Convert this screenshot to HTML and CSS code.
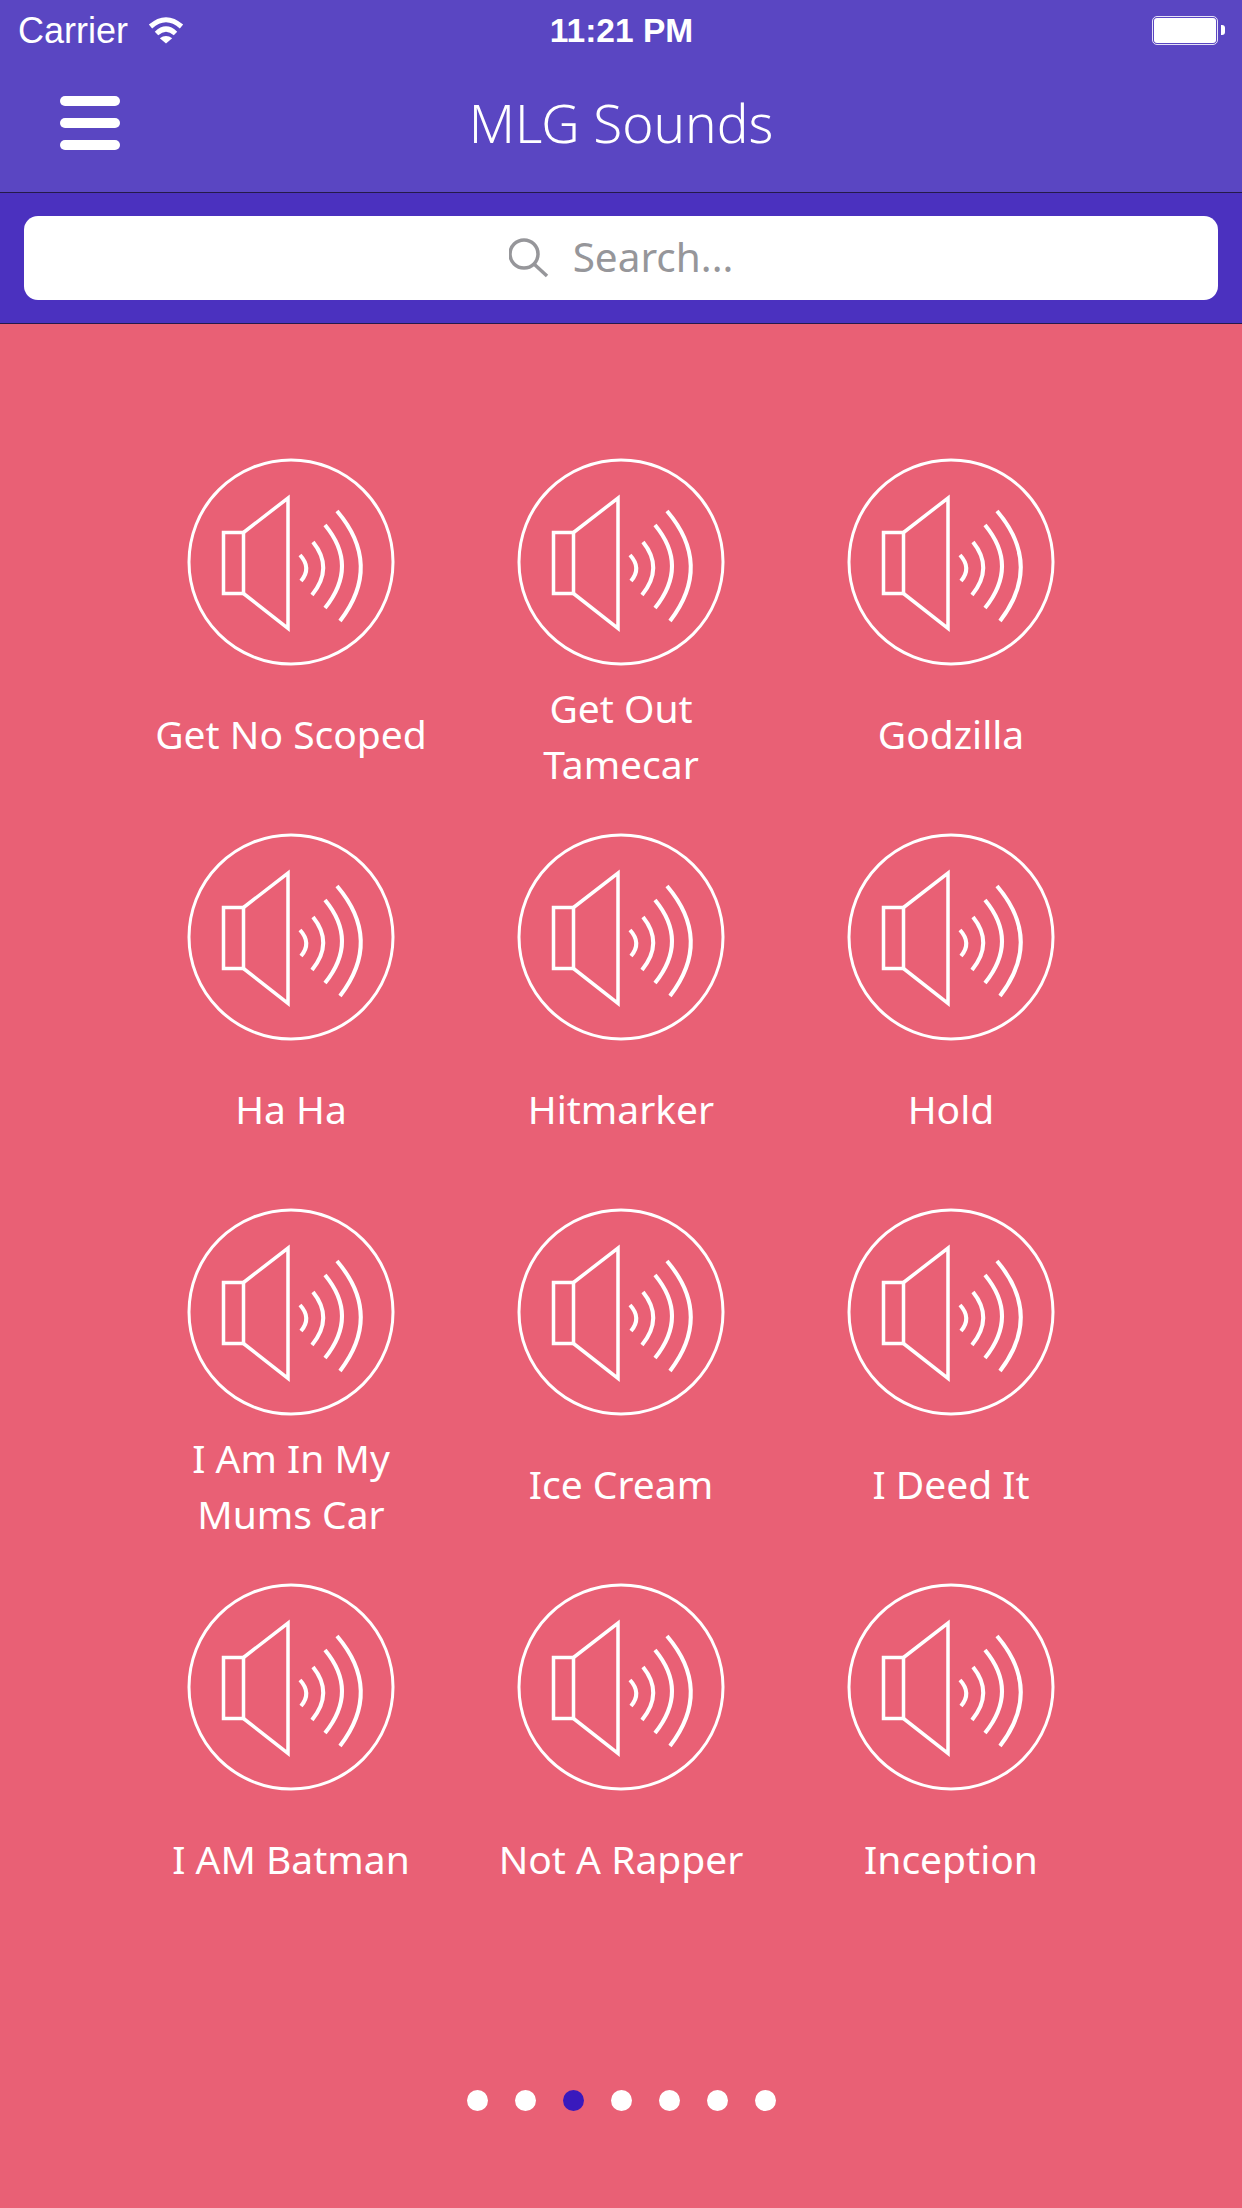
FILE: index.html
```html
<!DOCTYPE html>
<html lang="en">
<head>
  <meta charset="UTF-8">
  <meta name="viewport" content="width=device-width, initial-scale=1.0">
  <title>MLG Sounds</title>
  <link rel="stylesheet" href="styles.css">
</head>
<body>
  <svg class="sprite" width="0" height="0">
    <symbol id="speaker" viewBox="0 0 240 240">
      <circle class="ring" cx="120" cy="122" r="102" />
      <rect class="cone" x="52.5" y="92.5" width="20" height="61" />
      <path class="cone" d="M72.5 92.5 L117 58 V188.5 L72.5 153.5" />
      <path d="M129 115 Q141 128 130 141" />
      <path d="M142 102 Q163 128 141 155" />
      <path d="M154 85 Q188 126 154 168" />
      <path d="M166 71 Q212 125 169 181" />
    </symbol>
  </svg>

  <!-- Header -->
  <header class="top">
    <div class="status-bar">
      <div class="status-left">
        <span>Carrier</span>
        <svg class="wifi" width="38" height="28" viewBox="0 0 38 28">
          <path class="wifi-arc" d="M3.5 10.5 Q19 -3 34.5 10.5" />
          <path class="wifi-arc" d="M9.5 17.5 Q19 8.5 28.5 17.5" />
          <path d="M12.8 22.2 Q19 17.8 25.2 22.2 L19 27.5 Z" />
        </svg>
      </div>
      <div class="status-time">11:21 PM</div>
      <div class="status-right">
        <div class="battery"><div class="battery-fill"></div></div>
        <div class="battery-nub"></div>
      </div>
    </div>
    <nav class="nav">
      <div class="menu">
        <span></span>
        <span></span>
        <span></span>
      </div>
      <div class="title">MLG Sounds</div>
      <div></div>
    </nav>
  </header>

  <!-- Search -->
  <div class="search-band">
    <div class="search-box">
      <svg class="search-icon" width="40" height="40" viewBox="0 0 40 40">
        <circle cx="15" cy="16" r="14" />
        <path d="M25 26 L38 38" />
      </svg>
      <span>Search...</span>
    </div>
  </div>

  <!-- Sounds -->
  <main class="sounds">
    <div class="sound-grid">
      <div class="sound"><svg class="sound-icon"><use href="#speaker" /></svg><p class="sound-label">Get No Scoped</p></div>
      <div class="sound"><svg class="sound-icon"><use href="#speaker" /></svg><p class="sound-label">Get Out<br>Tamecar</p></div>
      <div class="sound"><svg class="sound-icon"><use href="#speaker" /></svg><p class="sound-label">Godzilla</p></div>
      <div class="sound"><svg class="sound-icon"><use href="#speaker" /></svg><p class="sound-label">Ha Ha</p></div>
      <div class="sound"><svg class="sound-icon"><use href="#speaker" /></svg><p class="sound-label">Hitmarker</p></div>
      <div class="sound"><svg class="sound-icon"><use href="#speaker" /></svg><p class="sound-label">Hold</p></div>
      <div class="sound"><svg class="sound-icon"><use href="#speaker" /></svg><p class="sound-label">I Am In My<br>Mums Car</p></div>
      <div class="sound"><svg class="sound-icon"><use href="#speaker" /></svg><p class="sound-label">Ice Cream</p></div>
      <div class="sound"><svg class="sound-icon"><use href="#speaker" /></svg><p class="sound-label">I Deed It</p></div>
      <div class="sound"><svg class="sound-icon"><use href="#speaker" /></svg><p class="sound-label">I AM Batman</p></div>
      <div class="sound"><svg class="sound-icon"><use href="#speaker" /></svg><p class="sound-label">Not A Rapper</p></div>
      <div class="sound"><svg class="sound-icon"><use href="#speaker" /></svg><p class="sound-label">Inception</p></div>
    </div>
    <div class="dots">
      <span class="dot"></span>
      <span class="dot"></span>
      <span class="dot active"></span>
      <span class="dot"></span>
      <span class="dot"></span>
      <span class="dot"></span>
      <span class="dot"></span>
    </div>
  </main>
</body>
</html>
```

FILE: styles.css
```css
:root {
  --header: #5a46c2;
  --band: #4b31bf;
  --pink: #e96075;
  --active: #3919bd;
  --line: #241a4a;
}

* {
  margin: 0;
  padding: 0;
  box-sizing: border-box;
}

body {
  width: 1242px;
  height: 2208px;
  font-family: 'Noto Sans', sans-serif;
  background: var(--pink);
  color: white;
  display: flex;
  flex-direction: column;
  overflow: hidden;
}

.sprite {
  display: block;
  height: 0;
}

/* Header */
.top {
  background: var(--header);
  height: 193px;
  border-bottom: 1px solid var(--line);
  display: flex;
  flex-direction: column;
}

.status-bar {
  height: 60px;
  padding: 2px 17px 0 18px;
  display: grid;
  grid-template-columns: 1fr auto 1fr;
  align-items: center;
  font-family: 'Liberation Sans', sans-serif;
  font-size: 36px;
}

.status-left {
  display: flex;
  align-items: center;
  gap: 19px;
}

.wifi {
  fill: white;
  margin-bottom: 3px;
}

.wifi-arc {
  fill: none;
  stroke: white;
  stroke-width: 5;
}

.status-time {
  font-weight: 700;
  font-size: 33.5px;
}

.status-right {
  display: flex;
  justify-content: flex-end;
  align-items: center;
  gap: 3px;
  margin-bottom: 2px;
}

.battery {
  width: 66px;
  height: 29px;
  border: 1px solid #e6e2f7;
  border-radius: 5px;
  padding: 1px;
}

.battery-fill {
  height: 100%;
  background: white;
  border-radius: 3px;
}

.battery-nub {
  width: 4px;
  height: 10px;
  background: white;
  border-radius: 0 3px 3px 0;
}

.nav {
  flex: 1;
  display: grid;
  grid-template-columns: 1fr auto 1fr;
  align-items: center;
  padding: 0 60px 8px;
}

.menu {
  width: 60px;
  margin-top: 2px;
  display: flex;
  flex-direction: column;
  gap: 12px;
}

.menu span {
  height: 10px;
  background: white;
  border-radius: 5px;
}

.title {
  font-size: 53px;
  font-weight: 300;
}

/* Search */
.search-band {
  height: 131px;
  background: var(--band);
  border-bottom: 1px solid var(--line);
  padding: 23px 24px 0;
}

.search-box {
  height: 84px;
  background: white;
  border-radius: 14px;
  display: flex;
  align-items: center;
  justify-content: center;
  gap: 24px;
  color: #96969a;
  font-size: 40.5px;
}

.search-box span {
  margin-bottom: 4px;
}

.search-icon {
  fill: none;
  stroke: #96969a;
  stroke-width: 3.5;
}

/* Sounds */
.sounds {
  flex: 1;
  display: flex;
  flex-direction: column;
  align-items: center;
  padding-top: 116px;
}

.sound-grid {
  display: grid;
  grid-template-columns: repeat(3, 330px);
  grid-auto-rows: 352px;
  row-gap: 23px;
}

.sound {
  display: flex;
  flex-direction: column;
  align-items: center;
}

.sound-icon {
  width: 240px;
  height: 240px;
  flex: none;
  fill: none;
  stroke: white;
  stroke-width: 4;
}

.ring {
  stroke-width: 3;
}

.cone {
  stroke-width: 3.5;
}

.sound-label {
  flex: 1;
  display: flex;
  align-items: center;
  text-align: center;
  font-size: 39px;
  line-height: 56px;
  padding-bottom: 4px;
}

.dots {
  margin-top: 173px;
  display: flex;
  gap: 27px;
}

.dot {
  width: 21px;
  height: 21px;
  border-radius: 50%;
  background: white;
}

.dot.active {
  background: var(--active);
}
```
